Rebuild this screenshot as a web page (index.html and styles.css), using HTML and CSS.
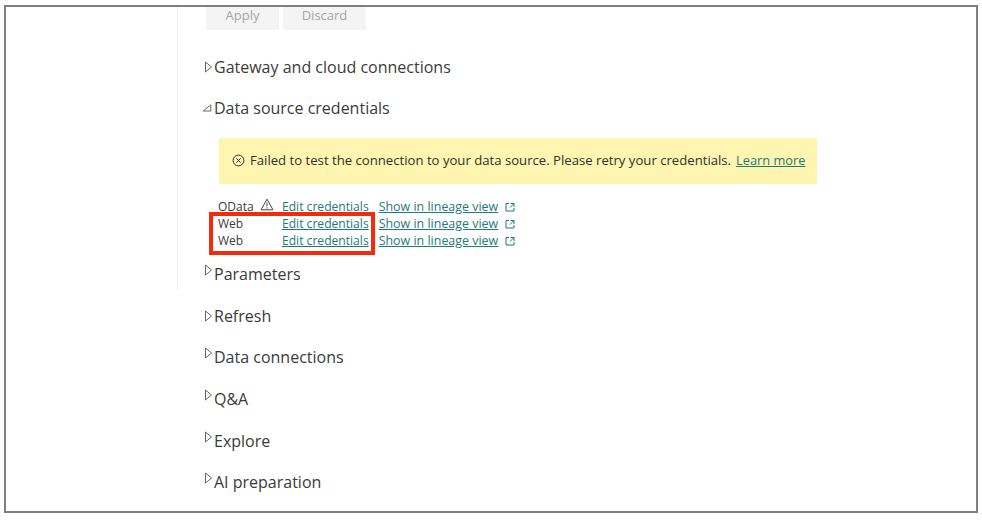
FILE: index.html
```html
<!DOCTYPE html>
<html lang="en">
<head>
<meta charset="utf-8">
<title>Data source credentials</title>
<link rel="stylesheet" href="styles.css">
</head>
<body>
<div class="frame">
  <div class="upper">
    <div class="buttons">
      <button class="btn btn-apply">Apply</button>
      <button class="btn btn-discard">Discard</button>
    </div>
    <div class="row row-first">
      <svg class="tri" width="9" height="12" viewBox="0 0 9 12"><path d="M1.5 1 L7.5 6 L1.5 11 Z"/></svg>
      <span>Gateway and cloud connections</span>
    </div>
    <div class="row">
      <svg class="tri tri-open" width="10" height="8" viewBox="0 0 10 8"><path d="M8.8 .8 V7 H1.2 Z"/></svg>
      <span>Data source credentials</span>
    </div>
    <div class="banner">
      <svg class="err" width="13" height="13" viewBox="0 0 13 13"><circle cx="6.5" cy="6.5" r="5.4"/><path d="M4.4 4.4 L8.6 8.6 M8.6 4.4 L4.4 8.6"/></svg>
      <span>Failed to test the connection to your data source. Please retry your credentials.</span>
      <a class="link learn" href="#">Learn more</a>
    </div>
    <div class="sources">
      <div class="source">
        <span class="kind">OData<svg class="warn" width="14" height="13" viewBox="0 0 14 13"><path d="M7 1.2 L13 11.8 H1 Z M7 4.6 V8.4 M7 9.4 V10.6"/></svg></span>
        <a class="link" href="#">Edit credentials</a>
        <a class="link lineage" href="#">Show in lineage view</a>
        <svg class="ext" width="10" height="10" viewBox="0 0 10 10"><path d="M4 1.5 H1 V9 H9 V6 M5.5 1.5 H9 V5 M9 1.5 L5 5.5"/></svg>
      </div>
      <div class="source">
        <span class="kind">Web</span>
        <a class="link" href="#">Edit credentials</a>
        <a class="link lineage" href="#">Show in lineage view</a>
        <svg class="ext" width="10" height="10" viewBox="0 0 10 10"><path d="M4 1.5 H1 V9 H9 V6 M5.5 1.5 H9 V5 M9 1.5 L5 5.5"/></svg>
      </div>
      <div class="source">
        <span class="kind">Web</span>
        <a class="link" href="#">Edit credentials</a>
        <a class="link lineage" href="#">Show in lineage view</a>
        <svg class="ext" width="10" height="10" viewBox="0 0 10 10"><path d="M4 1.5 H1 V9 H9 V6 M5.5 1.5 H9 V5 M9 1.5 L5 5.5"/></svg>
      </div>
      <div class="highlight"></div>
    </div>
    <div class="row row-params">
      <svg class="tri tri-high" width="9" height="12" viewBox="0 0 9 12"><path d="M1.5 1 L7.5 6 L1.5 11 Z"/></svg>
      <span>Parameters</span>
    </div>
  </div>
  <div class="lower">
    <div class="row">
      <svg class="tri" width="9" height="12" viewBox="0 0 9 12"><path d="M1.5 1 L7.5 6 L1.5 11 Z"/></svg>
      <span>Refresh</span>
    </div>
    <div class="row">
      <svg class="tri tri-high" width="9" height="12" viewBox="0 0 9 12"><path d="M1.5 1 L7.5 6 L1.5 11 Z"/></svg>
      <span>Data connections</span>
    </div>
    <div class="row">
      <svg class="tri tri-high" width="9" height="12" viewBox="0 0 9 12"><path d="M1.5 1 L7.5 6 L1.5 11 Z"/></svg>
      <span>Q&amp;A</span>
    </div>
    <div class="row">
      <svg class="tri tri-high" width="9" height="12" viewBox="0 0 9 12"><path d="M1.5 1 L7.5 6 L1.5 11 Z"/></svg>
      <span>Explore</span>
    </div>
    <div class="row">
      <svg class="tri tri-high" width="9" height="12" viewBox="0 0 9 12"><path d="M1.5 1 L7.5 6 L1.5 11 Z"/></svg>
      <span>AI preparation</span>
    </div>
  </div>
</div>
</body>
</html>
```
FILE: styles.css
```css
* { box-sizing: border-box; }
html, body { margin: 0; padding: 0; background: #fff; }
body {
  width: 982px;
  height: 520px;
  overflow: hidden;
  font-family: "Open Sans", "Noto Sans", sans-serif;
  color: #3b3a39;
}
.frame {
  width: 974px;
  height: 508px;
  margin: 5px 0 0 4px;
  border: 2px solid #7f7f7f;
  overflow: hidden;
  background: #fff;
}
.upper {
  margin-left: 171px;
  border-left: 1px solid #eeeeee;
  padding-left: 26px;
  height: 283px;
}
.lower { margin: 5px 0 0 198px; }
.buttons {
  display: flex;
  align-items: flex-end;
  gap: 4px;
  height: 23px;
  padding-left: 2px;
}
.btn {
  flex: none;
  height: 30px;
  border: 0;
  padding: 0;
  background: #f4f4f4;
  color: #a6a6a6;
  font: 13px "Open Sans", sans-serif;
}
.btn-apply { width: 73px; }
.btn-discard { width: 83px; }
.row {
  display: flex;
  align-items: center;
  height: 41.6px;
  font-size: 16px;
  color: #3b3a39;
}
.row-first { margin-top: 16px; }
.row-params { margin-top: 4px; }
.tri { flex: none; margin-left: 0; margin-right: 1px; }
.tri path { fill: #fff; stroke: #666; stroke-width: 1; }
.tri-open { margin-left: -2px; margin-right: 2px; }
.tri-high { margin-top: -8px; }
.banner {
  display: flex;
  align-items: center;
  width: 598px;
  height: 46px;
  margin: 9px 0 0 15px;
  padding: 0 0 2px 13px;
  background: #fdf5b0;
  font-size: 13.15px;
  color: #323130;
  white-space: nowrap;
}
.err { flex: none; margin: 0 5px 0 0; }
.err circle, .err path { fill: none; stroke: #323130; stroke-width: 1; }
.link { color: #1f7a78; text-decoration: underline; font-size: 12.1px; }
.learn { margin-left: 5px; font-size: 12.8px; }
.sources {
  position: relative;
  margin: 14px 0 0 14px;
  font-size: 12px;
}
.source {
  display: flex;
  align-items: center;
  height: 17px;
  white-space: nowrap;
}
.kind { display: flex; align-items: center; width: 64px; color: #3b3a39; }
.warn { margin-left: 6px; margin-top: -4px; }
.warn path { fill: none; stroke: #444; stroke-width: 1; }
.lineage { margin-left: 10px; font-size: 12.45px; }
.ext { margin-left: 7px; }
.ext path { fill: none; stroke: #1f7a78; stroke-width: 1; }
.highlight {
  position: absolute;
  left: -9px;
  top: 14px;
  width: 166px;
  height: 43px;
  border: 4px solid #f32b0c;
}
```
